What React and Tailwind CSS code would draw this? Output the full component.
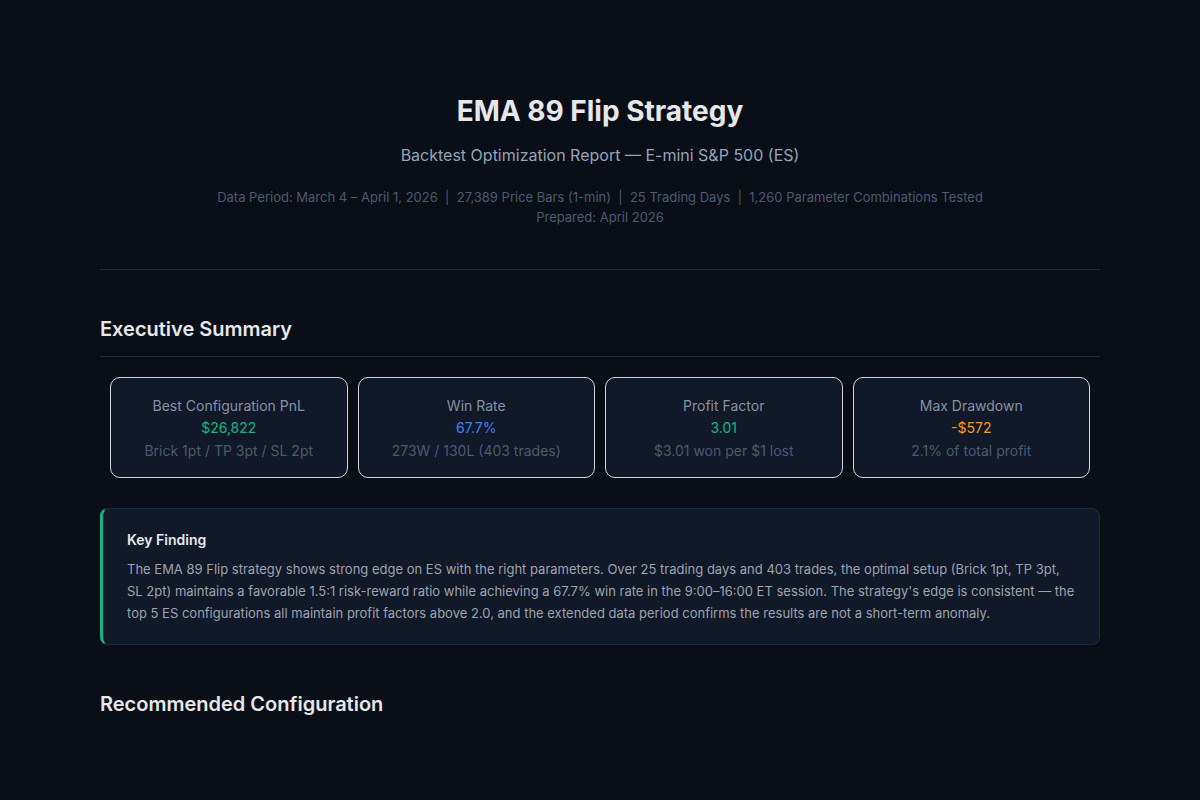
export default function App() {
  const cards = [
    { label: "Best Configuration PnL", value: "$26,822", color: "text-[#10b981]", sub: "Brick 1pt / TP 3pt / SL 2pt" },
    { label: "Win Rate", value: "67.7%", color: "text-[#3b82f6]", sub: "273W / 130L (403 trades)" },
    { label: "Profit Factor", value: "3.01", color: "text-[#10b981]", sub: "$3.01 won per $1 lost" },
    { label: "Max Drawdown", value: "-$572", color: "text-[#f59e0b]", sub: "2.1% of total profit" },
  ];
  return (
    <div className="min-h-[800px] bg-[#0a0e17] text-[#e5e7eb]" style={{ fontFamily: "Inter, 'Noto Sans', sans-serif" }}>
      <div className="mx-auto w-[1000px] pt-[92px]">
        <header className="text-center pb-[42px] border-b border-[#1e293b]">
          <h1 className="text-[28px] font-bold leading-[38px] text-[#e5e7eb]">EMA 89 Flip Strategy</h1>
          <p className="mt-[13px] text-[16px] text-[#94a3b8]">Backtest Optimization Report — E-mini S&amp;P 500 (ES)</p>
          <p className="mt-[20px] text-[13px] leading-[20px] text-[#4b5a70]">
            Data Period: March 4 – April 1, 2026 &nbsp;|&nbsp; 27,389 Price Bars (1-min) &nbsp;|&nbsp; 25 Trading Days &nbsp;|&nbsp; 1,260 Parameter Combinations Tested
            <br />Prepared: April 2026
          </p>
        </header>
        <h2 className="mt-[44px] text-[20px] font-semibold pb-[12px] border-b border-[#1e293b]">Executive Summary</h2>
        <div className="grid grid-cols-4 gap-[10px] px-[10px] mt-[20px]">
          {cards.map(c => (
            <div key={c.label} className="h-[101px] rounded-[10px] border border-[#d1d5db] bg-[#111827] text-center pt-[18px]">
              <div className="text-[14px] leading-[20px] text-[#8491a6]">{c.label}</div>
              <div className={`text-[14px] leading-[24px] ${c.color}`}>{c.value}</div>
              <div className="text-[14px] leading-[22px] text-[#4b5a70]">{c.sub}</div>
            </div>
          ))}
        </div>
        <div className="mt-[30px] rounded-[8px] border border-[#1e293b] border-l-[3px] border-l-[#10b981] bg-[#111827] px-[24px] py-[20px]">
          <div className="text-[14px] font-semibold text-[#e5e7eb]">Key Finding</div>
          <p className="mt-[8px] text-[13px] leading-[22px] text-[#9ca3af]">
            The EMA 89 Flip strategy shows strong edge on ES with the right parameters. Over 25 trading days and 403 trades, the optimal setup (Brick 1pt, TP 3pt, SL 2pt) maintains a favorable 1.5:1 risk-reward ratio while achieving a 67.7% win rate in the 9:00–16:00 ET session. The strategy's edge is consistent — the top 5 ES configurations all maintain profit factors above 2.0, and the extended data period confirms the results are not a short-term anomaly.
          </p>
        </div>
        <h2 className="mt-[44px] text-[20px] font-semibold">Recommended Configuration</h2>
      </div>
    </div>
  );
}
